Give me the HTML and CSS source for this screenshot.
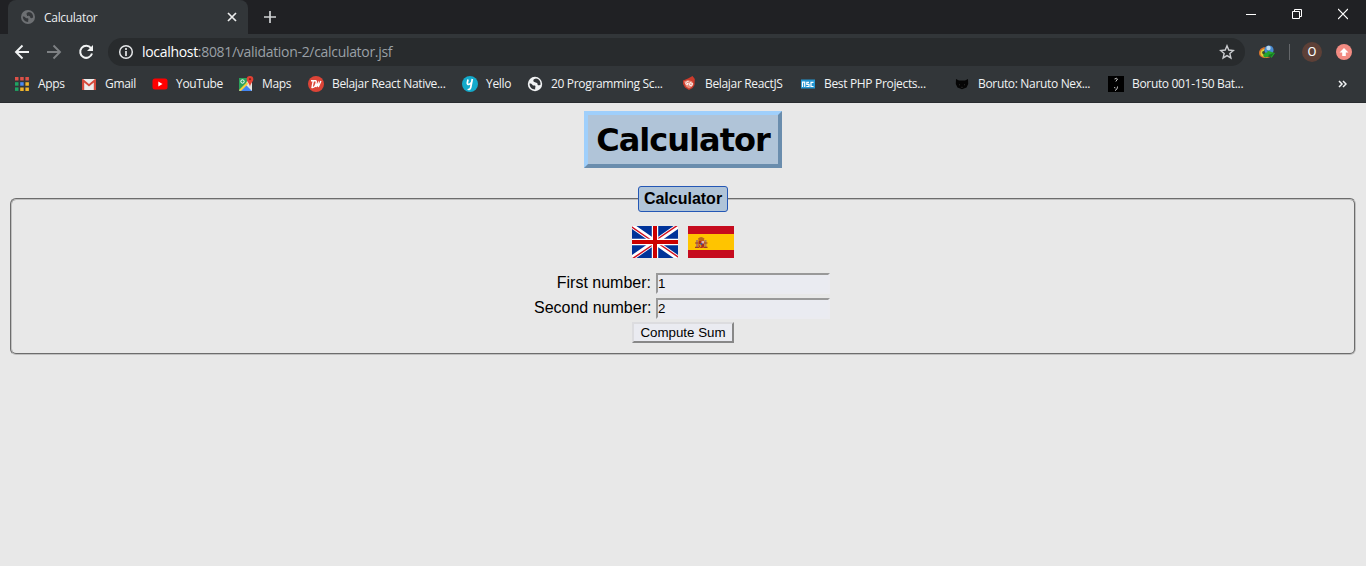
FILE: index.html
```html
<!DOCTYPE html>
<html lang="en">
<head>
<meta charset="utf-8">
<title>Calculator</title>
<link rel="stylesheet" href="styles.css">
</head>
<body>
<header class="browser">
  <div class="tabstrip">
    <div class="tab">
      <svg class="favicon" width="14" height="14" viewBox="0 0 16 16"><circle cx="8" cy="8" r="8" fill="#6d7073"/><path d="M2 7.500c3.500 0 2.500 2 5 2s1 1.500 1.200 4.300C4.500 13.500 2 11 2 7.500zM9 2.300C6.500 3 6 4 6.500 5.300s4 .9 4 2.700 1.500 1.500 3.300.7C14.300 5.300 12 2.500 9 2.300z" fill="#35383b"/></svg>
      <span class="tab-title">Calculator</span>
      <svg class="tab-close" width="10" height="10" viewBox="0 0 10 10"><path d="M1 1l8 8M9 1L1 9" stroke="#eceded" stroke-width="1.7"/></svg>
    </div>
    <svg class="newtab" width="12" height="12" viewBox="0 0 12 12"><path d="M6 0v12M0 6h12" stroke="#d0d2d4" stroke-width="1.7"/></svg>
    <div class="window-buttons">
      <svg width="10" height="12" viewBox="0 0 10 12"><path d="M0 6.500h10" stroke="#fff"/></svg>
      <svg width="10" height="12" viewBox="0 0 10 12"><path d="M.5 3.500h7v7h-7zM2.500 3.500v-2h7v7h-2" fill="none" stroke="#fff"/></svg>
      <svg width="10" height="12" viewBox="0 0 10 12"><path d="M0 1l10 10M10 1L0 11" stroke="#fff" stroke-width="1.2"/></svg>
    </div>
  </div>
  <div class="toolbar">
    <svg class="nav" width="16" height="16" viewBox="0 0 16 16"><path d="M15 8H2.500M8.500 1.500L2 8l6.500 6.500" fill="none" stroke="#f1f3f4" stroke-width="1.9"/></svg>
    <svg class="nav" width="16" height="16" viewBox="0 0 16 16"><path d="M1 8h12.500M7.500 1.500L14 8l-6.500 6.500" fill="none" stroke="#7e8184" stroke-width="1.9"/></svg>
    <svg class="nav" width="16" height="16" viewBox="0 0 16 16"><path d="M13 4.200A6 6 0 1 0 14 9.500" fill="none" stroke="#f1f3f4" stroke-width="2"/><path d="M15 1v6H9z" fill="#f1f3f4"/></svg>
    <div class="omnibox">
      <svg width="16" height="16" viewBox="0 0 16 16"><circle cx="8" cy="8" r="6.300" fill="none" stroke="#e4e6e8" stroke-width="1.500"/><path d="M8 4v2M8 7v5" stroke="#e4e6e8" stroke-width="1.700"/></svg>
      <div class="url"><span class="host">localhost</span>:8081/validation-2/calculator.jsf</div>
      <svg class="star" width="16" height="16" viewBox="0 0 16 16"><path d="M8 1.800l1.750 4.250 4.600.4-3.500 3 1.050 4.500L8 11.550l-3.900 2.400 1.050-4.500-3.500-3 4.600-.4z" fill="none" stroke="#cbcdd0" stroke-width="1.400"/></svg>
    </div>
    <svg class="download" width="18" height="16" viewBox="0 0 18 16"><path d="M1 9c0-4 4-6.500 7-5.500l-1 2C4 6 3 9 5.500 11c2 1.500 5 2.500 8 1.500C8 15.500 1 14 1 9z" fill="#d8722c"/><path d="M2.500 9c0-3 3-4.500 4.500-4L6 7c-2 2 1 4 4 6-4 1-7.500-1-7.500-4z" fill="#e2d33c"/><path d="M5 7c-1.500 1-1 3 1 4l2-3z" fill="#35502a"/><circle cx="11" cy="6" r="4.600" fill="#488ad0"/><circle cx="10.500" cy="4" r="2.200" fill="#bad9ec"/><path d="M7 9l3-1-1.500-1.500L17 9l-3.500 5-1-2L7 13.500 5 12z" fill="#25a72c"/><path d="M10 11l6-2-3 4z" fill="#137821"/></svg>
    <span class="divider"></span>
    <span class="avatar">O</span>
    <svg class="update" width="16" height="16" viewBox="0 0 16 16"><circle cx="8" cy="8" r="8" fill="#f28b82"/><path d="M8 4l4.500 4.500h-2.700V12H6.200V8.500H3.500z" fill="#fff"/></svg>
  </div>
  <nav class="bookmarks">
    <a class="bookmark w-apps"><svg width="16" height="16" viewBox="0 0 16 16"><path d="M1 1h3.500v3.500H1zM6.200 1h3.500v3.500H6.200zM11.400 1h3.500v3.500h-3.500z" fill="#de5148"/><path d="M1 6.200h3.500v3.500H1z" fill="#1fa463"/><path d="M6.200 6.200h3.500v3.500H6.200z" fill="#4a8af4"/><path d="M11.400 6.200h3.500v3.500h-3.500zM6.200 11.400h3.500v3.500H6.200zM11.400 11.400h3.500v3.500h-3.500z" fill="#f0b52c"/><path d="M1 11.400h3.500v3.500H1z" fill="#1fa463"/></svg><span>Apps</span></a>
    <a class="bookmark w-gmail"><svg width="16" height="16" viewBox="0 0 16 16"><path d="M1 3h14v11H1z" fill="#eceded"/><path d="M1 14V3h1l6 5 6-5h1v11h-2.200V6.500L8 10.500l-4.800-4V14z" fill="#d54b3d"/></svg><span>Gmail</span></a>
    <a class="bookmark w-youtube"><svg width="16" height="16" viewBox="0 0 16 16"><rect x=".5" y="2.500" width="15" height="11" rx="2.500" fill="#f00"/><path d="M6.300 5.500v5l4.200-2.500z" fill="#fff"/></svg><span>YouTube</span></a>
    <a class="bookmark w-maps"><svg width="16" height="16" viewBox="0 0 16 16"><path d="M1 2h13v13H1z" fill="#e6e6df"/><path d="M1 2h9L8 8l-7 7z" fill="#2ba15c"/><path d="M2 15l6-6 6 6z" fill="#4285f4"/><path d="M1 14l8-8 1 2-7 7z" fill="#f5cf3c"/><circle cx="4.500" cy="5.500" r="1.700" fill="none" stroke="#fff"/><path d="M12 0a3.300 3.300 0 0 1 3.300 3.300C15.300 6 12.500 7 12 11c-.5-4-3.300-5-3.300-7.700A3.300 3.300 0 0 1 12 0z" fill="#e34133"/><circle cx="12" cy="3.200" r="1.100" fill="#8c201a"/></svg><span>Maps</span></a>
    <a class="bookmark w-native"><svg width="16" height="16" viewBox="0 0 16 16"><circle cx="8" cy="8" r="8" fill="#dc4437"/><path d="M3 4.700h5M5.300 5L4 11.500q3 .5 3.800-4M8.300 4.500L8 11l2.200-4 .1 4 2.600-6" fill="none" stroke="#fff" stroke-width="1.350"/></svg><span>Belajar React Native...</span></a>
    <a class="bookmark w-yello"><svg width="16" height="16" viewBox="0 0 16 16"><circle cx="8" cy="8" r="8" fill="#14aacb"/><path d="M6 3.500L5.300 7c-.3 2 2.700 2 3.800-.5M10.300 3L8.800 11c-.5 2.500-2 3-3 2" fill="none" stroke="#fff" stroke-width="1.700"/></svg><span>Yello</span></a>
    <a class="bookmark w-prog"><svg width="16" height="16" viewBox="0 0 16 16"><circle cx="8" cy="8" r="7.200" fill="#f1f3f4"/><path d="M2.500 7.500c3.500 0 2 2 4.500 2s1 1.500 1.200 4C4.500 13.200 2.500 11 2.500 7.500zM9 2.500C6.500 3 6 4 6.500 5.300s4 .9 4 2.700 1.500 1.500 3 .7C14 5.500 12 2.700 9 2.500z" fill="#323639"/></svg><span>20 Programming Sc...</span></a>
    <a class="bookmark w-reactjs"><svg width="16" height="16" viewBox="0 0 16 16"><path d="M2 4.500l5-2L11.500 0l2.300 3-.3 6-2 3-3.500 2-4-2.500L2 8z" fill="#cc3b2c"/><path d="M3 5.500l4-1.500 4 1.200L12.500 8l-2 3L8 12.500l-3-2z" fill="#e98b79"/><path d="M7.500 5.500C4.500 5 4 8.500 6.300 9l1-1.500H6M9 6.500l2.500 1-.8 2.500-2.200-.8z" fill="none" stroke="#fff" stroke-width=".9"/></svg><span>Belajar ReactJS</span></a>
    <a class="bookmark w-php"><svg width="16" height="16" viewBox="0 0 16 16"><path d="M1 3.500h14v9H1z" fill="#2496d2"/><path d="M2.500 11V6.200h2.200V11M9 6.300H6.800v2H9v2.200H6.300M13.500 6.300H11v4.200h2.500" fill="none" stroke="#fff" stroke-width="1.200"/></svg><span>Best PHP Projects...</span></a>
    <a class="bookmark w-naruto"><svg width="16" height="16" viewBox="0 0 16 16"><path d="M2 3l3 1.500h6L14 3l.2 5-1.700 3.500L8 13.200l-4.500-1.700L1.800 8z" fill="#050505"/><path d="M5 8.500l1 .5M11 8.500l-1 .5M7.300 11.300h1.400" stroke="#3b3b3b" stroke-width=".7"/></svg><span>Boruto: Naruto Nex...</span></a>
    <a class="bookmark w-batch"><svg width="16" height="16" viewBox="0 0 16 16"><path d="M0 0h16v16H0z" fill="#000"/><path d="M6.500 3l2-.7 1 .7-1.700 2.500M6.500 11l.5 1.300M9.500 10.500c0 2-1 3.500-2.500 4" fill="none" stroke="#ddd" stroke-width=".9"/></svg><span>Boruto 001-150 Bat...</span></a>
    <svg class="overflow" width="9" height="8" viewBox="0 0 9 8"><path d="M1 1l3 3-3 3M5 1l3 3-3 3" fill="none" stroke="#f1f3f4" stroke-width="1.500"/></svg>
  </nav>
</header>
<main class="page">
  <h1 class="title">Calculator</h1>
  <fieldset class="panel">
    <legend class="legend">Calculator</legend>
    <div class="flags">
      <svg width="46" height="32" viewBox="0 0 46 32"><path d="M0 0h46v32H0z" fill="#039"/><path d="M0 0l46 32M46 0L0 32" stroke="#fff" stroke-width="5"/><path d="M-1 .5l22 15M47 31.500l-22-15M46-1L24 14M0 33l22-15" stroke="#cf1020" stroke-width="1.500"/><path d="M23 0v32M0 16h46" stroke="#fff" stroke-width="6.400"/><path d="M23 0v32M0 16h46" stroke="#c00" stroke-width="4"/></svg>
      <svg width="46" height="32" viewBox="0 0 46 32"><path d="M0 0h46v32H0z" fill="#c60b1e"/><path d="M0 8h46v16H0z" fill="#ffc400"/><path d="M8 14h2v8H8zM16.500 14h2v8h-2z" fill="#b88055"/><path d="M7 21.300h4M15.500 21.300h4M7 17h3.500M16 17h3.500" stroke="#a43b26" stroke-width="1.200"/><path d="M10 12.500q3-3 6.500 0l-.8 2h-5z" fill="#b96920"/><path d="M10.500 14.500h5.700v5q0 2.500-2.800 2.500t-2.900-2.500z" fill="#ad2920"/><path d="M13.500 15h2.500v2.500h-2.500z" fill="#d8b4b4"/><path d="M11 18h2.300v3H12z" fill="#d8961c"/><circle cx="13.400" cy="18" r="1" fill="#315b9f"/></svg>
    </div>
    <form class="form">
      <div class="fields">
        <label class="label" for="first">First number:</label><input class="input" id="first" type="text" value="1">
        <label class="label" for="second">Second number:</label><input class="input" id="second" type="text" value="2">
      </div>
      <button class="submit" type="button">Compute Sum</button>
    </form>
  </fieldset>
</main>
</body>
</html>
```
FILE: styles.css
```css
* { box-sizing: border-box; }
body { margin: 0; height: 566px; overflow: hidden; background: #e8e8e8; font-family: "Liberation Sans", Arial, sans-serif; font-size: 16px; color: #000; }
svg { display: block; flex: none; }
.browser { height: 103px; background: #323639; border-bottom: 1px solid #292c2f; font-family: "Open Sans", "Noto Sans", sans-serif; }
.tabstrip { display: flex; height: 34px; padding-left: 8px; background: #202124; }
.tab { display: flex; align-items: center; width: 240px; padding: 0 11px 0 13px; border-radius: 8px 8px 0 0; background: #323639; }
.tab-title { flex: 1; margin-left: 9px; color: #eceef0; font-size: 12px; letter-spacing: -.3px; }
.newtab { margin: 11px 0 0 16px; }
.window-buttons { display: flex; gap: 36px; margin: 8px 18px 0 auto; }
.toolbar { display: flex; align-items: center; height: 35px; padding: 1px 14px 0; }
.nav { margin-right: 16px; }
.omnibox { display: flex; align-items: center; width: 1137px; height: 28px; margin-left: -2px; padding: 0 10px; border-radius: 14px; background: #282b2d; }
.url { flex: 1; margin-left: 8px; font-size: 14px; line-height: 20px; color: #9aa0a6; letter-spacing: -.31px; }
.host { color: #fff; }
.download { margin-left: 13px; }
.divider { width: 1px; height: 16px; margin: 0 12px 0 13px; background: #64676a; }
.avatar { width: 20px; height: 20px; border-radius: 50%; background: #5d4037; color: #fff; font: 13px/20px Roboto, sans-serif; text-align: center; }
.update { margin-left: 14px; }
.bookmarks { display: flex; align-items: center; height: 30px; padding-left: 14px; }
.bookmark { display: flex; align-items: center; flex: none; gap: 8px; color: #f1f3f4; font-size: 12px; line-height: 16px; white-space: nowrap; letter-spacing: -.33px; }
.w-apps { width: 67px; }
.w-gmail { width: 71px; }
.w-youtube { width: 86px; }
.w-maps { width: 70px; }
.w-native { width: 154px; }
.w-yello { width: 65px; }
.w-prog { width: 154px; }
.w-reactjs { width: 119px; }
.w-php { width: 154px; }
.w-naruto { width: 154px; }
.w-batch { width: 230px; }
.page { padding: 8px 10px; }
.title { width: 198px; height: 57px; margin: 0 auto 18px; border: 4px solid; border-color: #9fcffb #6a8dad #6a8dad #9fcffb; background: #b0c4d8; font: bold 32px/51px "DejaVu Sans", Verdana, sans-serif; text-align: center; white-space: nowrap; letter-spacing: -1px; }
.panel { height: 169px; margin: 0; padding: 0 12px; border: 2px groove #c0c0c0; border-radius: 6px; }
.legend { width: 90px; height: 26px; margin: 0 auto; padding: 0; border: 1px solid #2457b5; border-radius: 3px; background: #b0c4d8; font-weight: bold; line-height: 24px; text-align: center; }
.flags { display: flex; justify-content: center; gap: 10px; padding-top: 14px; }
.form { display: flex; flex-direction: column; align-items: center; margin-top: 15px; }
.fields { display: grid; grid-template-columns: 117px 174px; column-gap: 5px; row-gap: 4px; margin-right: 2px; }
.label { line-height: 20px; text-align: right; white-space: nowrap; }
.input { width: 174px; height: 21px; padding: 0; border: 2px solid; border-color: #999 #ebebf0 #ebebf0 #999; background: #eaebf1; font: 13.333px "Liberation Sans", Arial, sans-serif; }
.submit { width: 102px; height: 21px; margin-top: 3px; padding: 0; border: 2px solid; border-color: #dcdcdf #888 #888 #dcdcdf; background: #eaebf1; color: #000; font: 13.333px "Liberation Sans", Arial, sans-serif; white-space: nowrap; }
```
